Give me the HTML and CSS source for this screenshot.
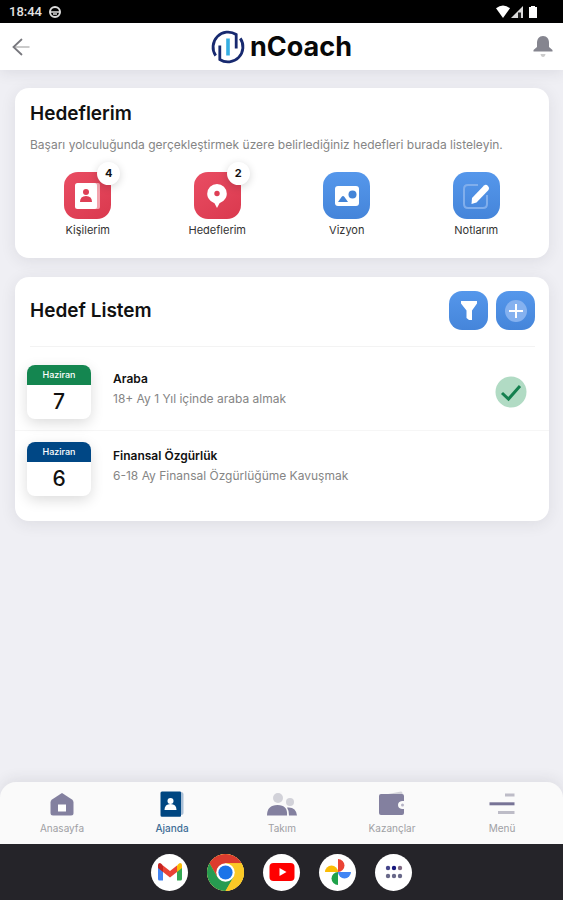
FILE: index.html
```html
<!DOCTYPE html>
<html lang="tr">
<head>
<meta charset="utf-8">
<meta name="viewport" content="width=device-width, initial-scale=1">
<title>nCoach</title>
<link rel="stylesheet" href="styles.css">
</head>
<body>
<div class="status">
  <span class="clock">18:44</span>
  <svg width="14" height="14" viewBox="0 0 14 14"><circle cx="7" cy="7" r="5" fill="none" stroke="#ddd" stroke-width="2"/><path d="M2 7h10M5 9h4" stroke="#ddd" stroke-width="1.6"/></svg>
  <svg class="signals" width="42" height="14" viewBox="0 0 42 14" fill="#fff"><path d="M0 3.200Q7-2.200 14 3.200L7 13z"/><path d="M15 13 27 1v12z" fill="#ddd"/><path d="M22 7.500h3V13h-3z" fill="#222"/><path d="M33 2h2V1h4v1h2v11h-8z"/></svg>
</div>
<header class="topbar">
  <button class="plain" aria-label="Geri"><svg width="18" height="18" viewBox="0 0 18 18" fill="none" stroke-linecap="round"><path d="M2 9h15" stroke="#bbb" stroke-width="1.500"/><path d="M9.500 1.500 1.500 9l8 7.500" stroke="#77777d" stroke-width="1.800"/></svg></button>
  <a class="brand" href="#">
    <svg width="34" height="34" viewBox="0 0 34 34" fill="none" stroke="#17296f" stroke-width="2.800"><path d="M4.700 25.600A15 15 0 0 1 25.200 4.500V18.500"/><path d="M29.300 8.400A15 15 0 0 1 8.800 29.500V15.500"/><path d="M12.900 24V10.500" stroke="none"/><path d="M17 8.500v17" stroke="#35aee2" stroke-width="3.600"/></svg>
    <span>nCoach</span>
  </a>
  <button class="plain" aria-label="Bildirimler"><svg width="20" height="22" viewBox="0 0 20 22"><path d="M10 0C6 0 4 3 4 7v4L.500 14v1.500h19V14L16 11V7c0-4-2-7-6-7z" fill="#85858f"/><path d="M7.500 18h5Q12 21 10 21t-2.500-3z" fill="#ccc"/></svg></button>
</header>
<main>
  <section class="card goals">
    <h1>Hedeflerim</h1>
    <p class="intro">Başarı yolculuğunda gerçekleştirmek üzere belirlediğiniz hedefleri burada listeleyin.</p>
    <div class="tiles">
      <a class="tile" href="#"><span class="icon red"><svg width="26" height="28" viewBox="0 0 26 28"><path d="M20 1h3q2 0 2 2v22q0 2-2 2h-3z" fill="#f3a4ae"/><rect y="1" width="22" height="26" rx="2.500" fill="#fff"/><circle cx="11" cy="10" r="3" fill="#de3f55"/><path d="M5 20q0-6 6-6t6 6z" fill="#de3f55"/></svg><b class="badge">4</b></span>Kişilerim</a>
      <a class="tile" href="#"><span class="icon red"><svg width="22" height="26" viewBox="0 0 22 26"><path d="M11 1a9.800 9.800 0 0 0-9.800 9.800c0 5 4 8 7.300 9.500L11 25l2.500-4.700c3.300-1.500 7.300-4.500 7.300-9.500A9.800 9.800 0 0 0 11 1z" fill="#fff"/><circle cx="11" cy="10.500" r="2.700" fill="#de3f55"/></svg><b class="badge">2</b></span>Hedeflerim</a>
      <a class="tile" href="#"><span class="icon blue"><svg width="26" height="22" viewBox="0 0 26 22"><rect x="1" y="1" width="24" height="20" rx="3" fill="#fff"/><path d="M4 17l3.500-5q1.500-2 3 0l3.500 5z" fill="#4384d7"/><circle cx="18.500" cy="9.500" r="4" fill="#4384d7"/></svg></span>Vizyon</a>
      <a class="tile" href="#"><span class="icon blue"><svg width="30" height="30" viewBox="0 0 30 30"><path d="M17 4H7Q3 4 3 8v15q0 4 4 4h15q4 0 4-4V14" fill="none" stroke="#80aeec" stroke-width="2"/><path d="M11 17 23 4.500q2-1.500 4 .5t.5 4L15.500 21.500 10.500 23z" fill="#fff"/></svg></span>Notlarım</a>
    </div>
  </section>
  <section class="card list">
    <div class="listhead"><h2>Hedef Listem</h2>
      <button class="square blue" aria-label="Filtrele"><svg width="18" height="20" viewBox="0 0 18 20" fill="#fff"><path d="M1 0h16v2.500L12 9.500V19h-3L6.500 17V9.500L1 2.500z"/></svg></button>
      <button class="square blue" aria-label="Ekle"><svg width="24" height="24" viewBox="0 0 24 24"><circle cx="12" cy="12" r="11" fill="#85b1ef"/><path d="M12 5v14M5 12h14" stroke="#fff" stroke-width="2"/></svg></button>
    </div>
    <ul>
      <li><time class="date green" datetime="06-07"><span>Haziran</span><b>7</b></time><div class="text"><h3>Araba</h3><p>18+ Ay 1 Yıl içinde araba almak</p></div><svg class="done" width="32" height="32" viewBox="0 0 32 32"><circle cx="16" cy="16" r="15.500" fill="#b1dbc4"/><path d="m7 17 6.500 6L25 10" fill="none" stroke="#14804f" stroke-width="3"/></svg></li>
      <li><time class="date navy" datetime="06-06"><span>Haziran</span><b>6</b></time><div class="text"><h3>Finansal Özgürlük</h3><p>6-18 Ay Finansal Özgürlüğüme Kavuşmak</p></div></li>
    </ul>
  </section>
</main>
<nav class="tabs">
  <a href="#"><svg width="24" height="26" viewBox="0 0 24 26"><path d="M12 2 22 8.500q1.500 1 1.500 3V22q0 2.500-2.500 2.500H3Q.5 24.500.5 22V11.500q0-2 1.500-3z" fill="#83809f"/><rect x="8" y="13.500" width="8" height="7" fill="#fff"/></svg>Anasayfa</a>
  <a class="active" href="#"><svg width="24" height="26" viewBox="0 0 24 26"><path d="M19 1h2q2.500 0 2.500 2.500v18q0 2.500-2.500 2.500h-2z" fill="#a9bfd6"/><path d="M2 .5h18q1 0 1 1V25q0 .7-1 .7H2q-1.500 0-1.500-1.500V2Q.5.500 2 .5z" fill="#004681"/><circle cx="10.500" cy="10" r="3" fill="#fff"/><path d="M4.500 19q0-6 6-6t6 6z" fill="#fff"/></svg>Ajanda</a>
  <a href="#"><svg width="30" height="26" viewBox="0 0 30 26"><g fill="#d2d2d9"><circle cx="11" cy="7" r="5"/><circle cx="23" cy="11" r="4"/></g><path d="M0 24.500Q0 14 10.500 14T20 24.500zM20 16.500q9-1 10 8h-8q0-5-2-8z" fill="#83809f"/></svg>Takım</a>
  <a href="#"><svg width="28" height="26" viewBox="0 0 28 26"><path d="m5 4 18-3.500q1.500 0 1.500 2V5z" fill="#d2d2d9"/><path d="M3 3h21q2 0 2 2v5h-2q-4 .5-4 4t4 4h2v4q0 2-2 2H3q-2 0-2-2V5q0-2 2-2z" fill="#83809f"/><circle cx="24.500" cy="14" r="1.500" fill="#b6b4c6"/></svg>Kazançlar</a>
  <a href="#"><svg width="26" height="26" viewBox="0 0 26 26" fill="none" stroke-width="3"><path d="M16 4h9.500M9 21.500h16.500" stroke="#bdbcc7"/><path d="M.5 12.800h25" stroke="#777396"/></svg>Menü</a>
</nav>
<nav class="dock">
  <a href="#" aria-label="Gmail"><svg width="26" height="20" viewBox="0 0 26 20"><path d="M1 4v13q0 1.500 1.500 1.500H6V7z" fill="#4285f4"/><path d="M20 7v11.500h3.500q1.500 0 1.500-1.500V4z" fill="#34a853"/><path d="M20 3.500V10l5-4V3q0-2-2-2-1 0-3 2.500z" fill="#fbbc04"/><path d="M1 3v3l5 4V3.500Q4 1 3 1 1 1 1 3z" fill="#c5221f"/><path d="m6 3.500 7 5.500 7-5.500V10l-7 5.500L6 10z" fill="#ea4335"/></svg></a>
  <a href="#" aria-label="Chrome"><svg width="37" height="37" viewBox="0 0 38 38"><circle cx="19" cy="19" r="19" fill="#fbc926"/><path d="M2.550 9.500A19 19 0 0 1 35.450 9.500H19L10.770 23.750z" fill="#dc3c2e"/><path d="M2.550 9.500A19 19 0 0 0 19 38L27.230 23.750H10.770z" fill="#279b50"/><path d="M19 9.500h16.450A19 19 0 0 1 19 38l8.230-14.250z" fill="#fbc926"/><circle cx="19" cy="19" r="9.500" fill="#fff"/><circle cx="19" cy="19" r="7.300" fill="#1a73e8"/></svg></a>
  <a href="#" aria-label="YouTube"><svg width="26" height="20" viewBox="0 0 26 20"><rect x=".5" y="1" width="25" height="18" rx="4" fill="#f00"/><path d="m10.500 6 7 4-7 4z" fill="#fff"/></svg></a>
  <a href="#" aria-label="Fotoğraflar"><svg width="28" height="28" viewBox="0 0 28 28"><path d="M14 1a6.500 6.500 0 0 1 0 13z" fill="#ea4335"/><path d="M27 14a6.500 6.500 0 0 1-13 0z" fill="#4285f4"/><path d="M14 27a6.500 6.500 0 0 1 0-13z" fill="#1fa24a"/><path d="M1 14a6.500 6.500 0 0 1 13 0z" fill="#fbbc04"/></svg></a>
  <a href="#" aria-label="Uygulamalar"><svg width="18" height="14" viewBox="0 0 18 14" fill="#686889"><circle cx="3" cy="3" r="2.200" fill="#45458b"/><circle cx="9" cy="3" r="2.200" fill="#17177d"/><circle cx="15" cy="3" r="2.200" fill="#806a83"/><circle cx="3" cy="11" r="2.200"/><circle cx="9" cy="11" r="2.200"/><circle cx="15" cy="11" r="2.200"/></svg></a>
</nav>
</body>
</html>
```
FILE: styles.css
```css
* { box-sizing: border-box; margin: 0; padding: 0; }
body {
  min-height: 100vh;
  display: flex;
  flex-direction: column;
  background: #efeff4;
  color: #111;
  font-family: Inter, "Liberation Sans", sans-serif;
}
svg { display: block; flex: none; }
a { color: inherit; text-decoration: none; }
button { border: 0; background: none; }

.status {
  display: flex;
  align-items: center;
  gap: 6px;
  height: 23px;
  padding: 0 25px 0 9px;
  background: #000;
  color: #e4e4e4;
}
.clock { font: 500 13px Roboto, sans-serif; }
.signals { margin-left: auto; }

.topbar {
  display: flex;
  align-items: center;
  justify-content: space-between;
  height: 47px;
  padding: 0 10px 0 12px;
  background: #fff;
  box-shadow: 0 2px 14px rgba(40, 40, 60, .1);
}
.brand {
  display: flex;
  align-items: center;
  gap: 5px;
  color: #080808;
  font-size: 27px;
  font-weight: 700;
}

main {
  flex: 1;
  display: flex;
  flex-direction: column;
  gap: 19px;
  padding: 18px 14px 20px 15px;
}
.card {
  border-radius: 14px;
  background: #fff;
  box-shadow: 0 3px 16px rgba(40, 40, 60, .09);
}
h1, h2 { font-size: 19px; line-height: 24px; font-weight: 600; }
.goals { padding: 14px 8px 20px; }
.goals h1, .intro { padding: 0 7px; }
.intro {
  margin-top: 10px;
  color: #858585;
  font-size: 12px;
  line-height: 18px;
}
.tiles { display: grid; grid-template-columns: repeat(4, 1fr); margin-top: 18px; }
.tile {
  display: flex;
  flex-direction: column;
  align-items: center;
  gap: 3px;
  color: #333;
  font-size: 11px;
  line-height: 16px;
}
.icon {
  position: relative;
  display: grid;
  place-items: center;
  width: 47px;
  height: 47px;
  border-radius: 14px;
}
.red { background: linear-gradient(145deg, #e94d63, #da394e); }
.blue { background: linear-gradient(#5597eb, #4585da); }
.badge {
  position: absolute;
  top: -10px;
  right: -9px;
  width: 23px;
  height: 23px;
  border-radius: 50%;
  background: #fff;
  box-shadow: 0 2px 8px rgba(0, 0, 0, .16);
  color: #111;
  font-size: 11px;
  line-height: 23px;
  text-align: center;
}

.list { padding-bottom: 14px; }
.listhead {
  display: flex;
  align-items: center;
  gap: 8px;
  height: 70px;
  margin: 0 14px 0 15px;
  padding-bottom: 2px;
  border-bottom: 1px solid #f3f3f3;
}
.listhead h2 { flex: 1; }
.square {
  display: grid;
  place-items: center;
  width: 39px;
  height: 39px;
  border-radius: 13px;
}
ul { list-style: none; padding-top: 6px; }
li {
  display: flex;
  align-items: center;
  gap: 22px;
  height: 77px;
  padding: 0 22px 0 12px;
}
li + li { border-top: 1px solid #f6f6f6; }
.date {
  width: 64px;
  overflow: hidden;
  border-radius: 8px;
  box-shadow: 0 4px 14px rgba(0, 0, 0, .14);
  text-align: center;
}
.date span {
  display: block;
  color: #fff;
  font-size: 9px;
  font-weight: 500;
  line-height: 20px;
}
.date b {
  display: block;
  font-size: 21px;
  font-weight: 500;
  line-height: 34px;
}
.green span { background: #148650; }
.navy span { background: #004785; }
.text { flex: 1; padding-bottom: 7px; }
.text h3 { font-size: 12px; font-weight: 600; line-height: 21px; }
.text p { color: #858585; font-size: 12px; line-height: 20px; }

.tabs {
  display: grid;
  grid-template-columns: repeat(5, 1fr);
  height: 62px;
  padding: 9px 6px 0 7px;
  border-radius: 16px 16px 0 0;
  background: #fafafa;
  box-shadow: 0 -3px 14px rgba(40, 40, 60, .09);
  color: #a0a0a4;
  font-size: 10px;
  line-height: 16px;
}
.tabs a { display: flex; flex-direction: column; align-items: center; gap: 3px; }
.tabs .active { color: #3e6d96; font-weight: 500; }
.dock {
  display: flex;
  align-items: center;
  justify-content: center;
  gap: 19px;
  height: 56px;
  background: #252429;
}
.dock a {
  display: grid;
  place-items: center;
  width: 37px;
  height: 37px;
  border-radius: 50%;
  background: #fff;
}
```
